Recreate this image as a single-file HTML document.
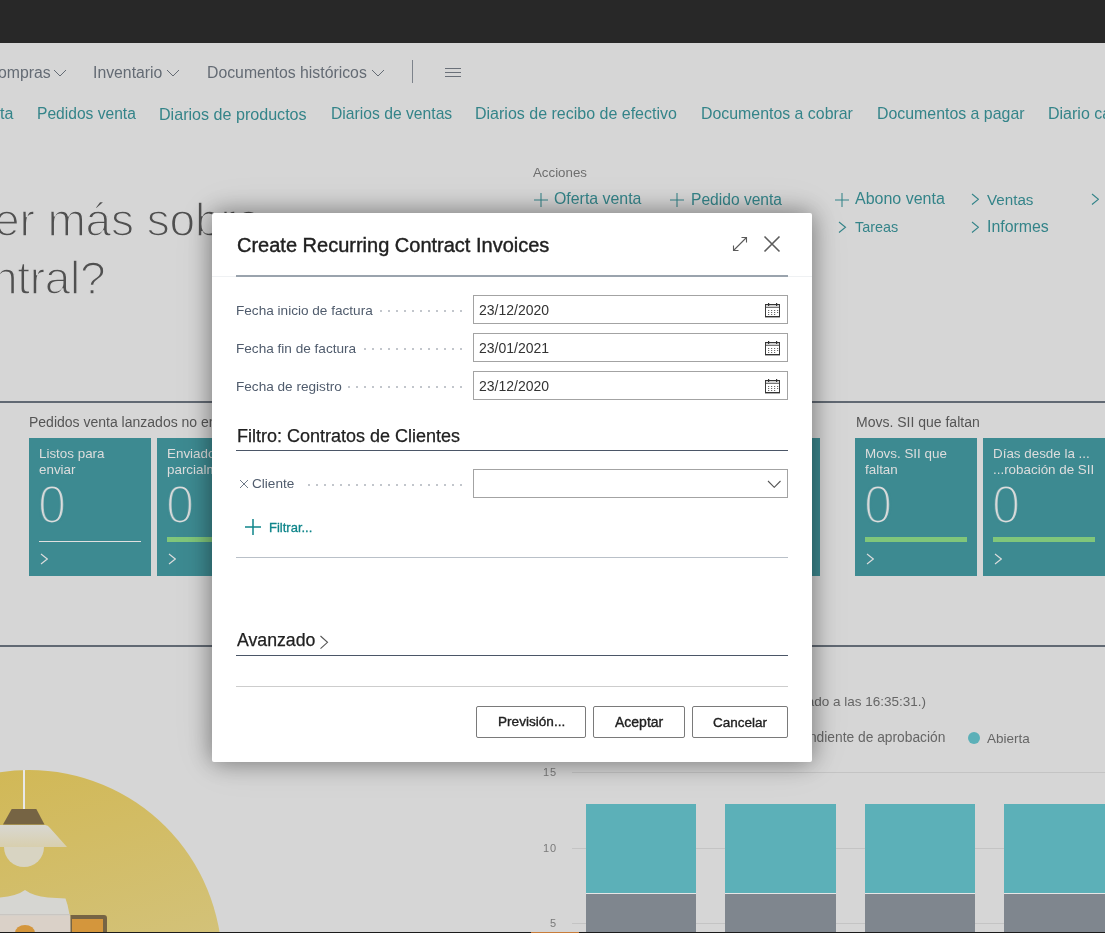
<!DOCTYPE html>
<html><head><meta charset="utf-8"><style>
html,body{margin:0;padding:0;width:1105px;height:933px;overflow:hidden;background:#d6d6d6;}
body>div,body>svg{position:absolute;}
.t{font-family:"Liberation Sans", sans-serif;white-space:nowrap;will-change:transform;}
</style></head><body>
<div style="left:0px;top:0px;width:1105px;height:43px;background:#282828;"></div>
<div class="t" style="right:1054.5px;top:65.33px;font-size:15.8px;line-height:15.8px;color:#646b74;">ompras</div>
<svg style="left:53px;top:68.5px" width="14" height="8"><path d="M1 1 L7.0 7 L13 1" fill="none" stroke="#646b74" stroke-width="1"/></svg>
<div class="t" style="left:93px;top:65.33px;font-size:15.8px;line-height:15.8px;color:#646b74;">Inventario</div>
<svg style="left:166px;top:68.5px" width="14" height="8"><path d="M1 1 L7.0 7 L13 1" fill="none" stroke="#646b74" stroke-width="1"/></svg>
<div class="t" style="left:206.5px;top:65.33px;font-size:15.8px;line-height:15.8px;color:#646b74;">Documentos históricos</div>
<svg style="left:370.5px;top:68.5px" width="14" height="8"><path d="M1 1 L7.0 7 L13 1" fill="none" stroke="#646b74" stroke-width="1"/></svg>
<div style="left:412px;top:60px;width:1px;height:23px;background:#7d838b;"></div>
<div style="left:445px;top:68px;width:16px;height:1px;background:#6a7079;"></div>
<div style="left:445px;top:72px;width:16px;height:1px;background:#6a7079;"></div>
<div style="left:445px;top:76px;width:16px;height:1px;background:#6a7079;"></div>
<div class="t" style="right:1092px;top:106.06px;font-size:16px;line-height:16px;color:#348489;">ta</div>
<div class="t" style="left:36.5px;top:106.40px;font-size:15.6px;line-height:15.6px;color:#348489;">Pedidos venta</div>
<div class="t" style="left:159px;top:105.98px;font-size:16.1px;line-height:16.1px;color:#348489;">Diarios de productos</div>
<div class="t" style="left:330.5px;top:106.32px;font-size:15.7px;line-height:15.7px;color:#348489;">Diarios de ventas</div>
<div class="t" style="left:475px;top:106.06px;font-size:16px;line-height:16px;color:#348489;">Diarios de recibo de efectivo</div>
<div class="t" style="left:701px;top:106.15px;font-size:15.9px;line-height:15.9px;color:#348489;">Documentos a cobrar</div>
<div class="t" style="left:877px;top:106.15px;font-size:15.9px;line-height:15.9px;color:#348489;">Documentos a pagar</div>
<div class="t" style="left:1048px;top:106.06px;font-size:16px;line-height:16px;color:#348489;">Diario caja</div>
<div class="t" style="left:533.2px;top:165.75px;font-size:13.3px;line-height:13.3px;color:#6e6e6e;">Acciones</div>
<svg style="left:534.0px;top:193px" width="14" height="14"><path d="M7.0 0 V14 M0 7.0 H14" fill="none" stroke="#348489" stroke-width="1.05"/></svg>
<div class="t" style="left:554.4px;top:191.35px;font-size:15.9px;line-height:15.9px;color:#348489;">Oferta venta</div>
<svg style="left:670.0px;top:193px" width="14" height="14"><path d="M7.0 0 V14 M0 7.0 H14" fill="none" stroke="#348489" stroke-width="1.05"/></svg>
<div class="t" style="left:690.5px;top:191.60px;font-size:15.6px;line-height:15.6px;color:#348489;">Pedido venta</div>
<svg style="left:834.5px;top:193px" width="14" height="14"><path d="M7.0 0 V14 M0 7.0 H14" fill="none" stroke="#348489" stroke-width="1.05"/></svg>
<div class="t" style="left:855px;top:191.26px;font-size:16px;line-height:16px;color:#348489;">Abono venta</div>
<svg style="left:970.5px;top:193.2px" width="8.5" height="12.5"><path d="M1 1 L7.5 6.25 L1 11.5" fill="none" stroke="#348489" stroke-width="1.1"/></svg>
<div class="t" style="left:987px;top:191.94px;font-size:15.2px;line-height:15.2px;color:#348489;">Ventas</div>
<svg style="left:1090.5px;top:193.2px" width="8.5" height="12.5"><path d="M1 1 L7.5 6.25 L1 11.5" fill="none" stroke="#348489" stroke-width="1.1"/></svg>
<svg style="left:838px;top:220.5px" width="8.5" height="12.5"><path d="M1 1 L7.5 6.25 L1 11.5" fill="none" stroke="#348489" stroke-width="1.1"/></svg>
<div class="t" style="left:855px;top:219.82px;font-size:14.4px;line-height:14.4px;color:#348489;">Tareas</div>
<svg style="left:970.5px;top:220.5px" width="8.5" height="12.5"><path d="M1 1 L7.5 6.25 L1 11.5" fill="none" stroke="#348489" stroke-width="1.1"/></svg>
<div class="t" style="left:987px;top:218.55px;font-size:15.9px;line-height:15.9px;color:#348489;">Informes</div>
<div class="t" style="left:-6.5px;top:196.78px;font-size:46px;line-height:46px;color:#505050;letter-spacing:-0.1px;-webkit-text-stroke:1.5px #d6d6d6">er más sobre</div>
<div class="t" style="left:-8px;top:255.08px;font-size:46px;line-height:46px;color:#505050;letter-spacing:-0.3px;-webkit-text-stroke:1.5px #d6d6d6">ntral?</div>
<div style="left:0px;top:401px;width:1105px;height:2px;background:#616973;"></div>
<div style="left:0px;top:645px;width:1105px;height:2px;background:#616973;"></div>
<div class="t" style="left:29.4px;top:415.16px;font-size:14px;line-height:14px;color:#555555;">Pedidos venta lanzados no enviados</div>
<div class="t" style="left:855.7px;top:415.16px;font-size:14px;line-height:14px;color:#555555;">Movs. SII que faltan</div>
<div style="left:29px;top:438px;width:122px;height:138px;background:#3d8a91;"></div>
<div class="t" style="left:39px;top:446.66px;font-size:13.4px;line-height:13.4px;color:#dddddd;">Listos para</div>
<div class="t" style="left:39px;top:462.66px;font-size:13.4px;line-height:13.4px;color:#dddddd;">enviar</div>
<div class="t" style="left:37.8px;top:478.16px;font-size:53px;line-height:53px;color:#dddddd;-webkit-text-stroke:2.2px #3d8a91;transform:scaleX(0.95);transform-origin:0 0">0</div>
<div style="left:39px;top:541px;width:102px;height:1px;background:#e0e0e0;"></div>
<svg style="left:40px;top:553px" width="8.3" height="12"><path d="M1 1 L7.3 6.0 L1 11" fill="none" stroke="#dddddd" stroke-width="1.1"/></svg>
<div style="left:157px;top:438px;width:122px;height:138px;background:#3d8a91;"></div>
<div class="t" style="left:167px;top:446.66px;font-size:13.4px;line-height:13.4px;color:#dddddd;">Enviados</div>
<div class="t" style="left:167px;top:462.66px;font-size:13.4px;line-height:13.4px;color:#dddddd;">parcialmente</div>
<div class="t" style="left:165.8px;top:478.16px;font-size:53px;line-height:53px;color:#dddddd;-webkit-text-stroke:2.2px #3d8a91;transform:scaleX(0.95);transform-origin:0 0">0</div>
<div style="left:167px;top:537px;width:102px;height:5px;background:#80c67a;"></div>
<svg style="left:168px;top:553px" width="8.3" height="12"><path d="M1 1 L7.3 6.0 L1 11" fill="none" stroke="#dddddd" stroke-width="1.1"/></svg>
<div style="left:698px;top:438px;width:122px;height:138px;background:#3d8a91;"></div>
<div class="t" style="left:708px;top:446.66px;font-size:13.4px;line-height:13.4px;color:#dddddd;">Pedidos</div>
<div class="t" style="left:708px;top:462.66px;font-size:13.4px;line-height:13.4px;color:#dddddd;">abiertos</div>
<div class="t" style="left:706.8px;top:478.16px;font-size:53px;line-height:53px;color:#dddddd;-webkit-text-stroke:2.2px #3d8a91;transform:scaleX(0.95);transform-origin:0 0">0</div>
<div style="left:708px;top:537px;width:102px;height:5px;background:#80c67a;"></div>
<svg style="left:709px;top:553px" width="8.3" height="12"><path d="M1 1 L7.3 6.0 L1 11" fill="none" stroke="#dddddd" stroke-width="1.1"/></svg>
<div style="left:855px;top:438px;width:122px;height:138px;background:#3d8a91;"></div>
<div class="t" style="left:865px;top:446.66px;font-size:13.4px;line-height:13.4px;color:#dddddd;">Movs. SII que</div>
<div class="t" style="left:865px;top:462.66px;font-size:13.4px;line-height:13.4px;color:#dddddd;">faltan</div>
<div class="t" style="left:863.8px;top:478.16px;font-size:53px;line-height:53px;color:#dddddd;-webkit-text-stroke:2.2px #3d8a91;transform:scaleX(0.95);transform-origin:0 0">0</div>
<div style="left:865px;top:537px;width:102px;height:5px;background:#80c67a;"></div>
<svg style="left:866px;top:553px" width="8.3" height="12"><path d="M1 1 L7.3 6.0 L1 11" fill="none" stroke="#dddddd" stroke-width="1.1"/></svg>
<div style="left:983px;top:438px;width:122px;height:138px;background:#3d8a91;"></div>
<div class="t" style="left:993px;top:446.66px;font-size:13.4px;line-height:13.4px;color:#dddddd;">Días desde la ...</div>
<div class="t" style="left:993px;top:462.66px;font-size:13.4px;line-height:13.4px;color:#dddddd;">...robación de SII</div>
<div class="t" style="left:991.8px;top:478.16px;font-size:53px;line-height:53px;color:#dddddd;-webkit-text-stroke:2.2px #3d8a91;transform:scaleX(0.95);transform-origin:0 0">0</div>
<div style="left:993px;top:537px;width:102px;height:5px;background:#80c67a;"></div>
<svg style="left:994px;top:553px" width="8.3" height="12"><path d="M1 1 L7.3 6.0 L1 11" fill="none" stroke="#dddddd" stroke-width="1.1"/></svg>
<div class="t" style="right:178.60000000000002px;top:695.08px;font-size:13.5px;line-height:13.5px;color:#666666;">(Actualizado a las 16:35:31.)</div>
<div class="t" style="right:160px;top:731.33px;font-size:13.8px;line-height:13.8px;color:#666666;">Pendiente de aprobación</div>
<div style="left:967.5px;top:732.3px;width:12px;height:12px;border-radius:50%;background:#5cb0b8"></div>
<div class="t" style="left:987px;top:731.58px;font-size:13.5px;line-height:13.5px;color:#666666;">Abierta</div>
<div style="left:572px;top:772px;width:533px;height:1px;background:#c4c4c4;"></div>
<div class="t" style="right:547.5px;top:767.19px;font-size:11px;line-height:11px;color:#7a7a7a;letter-spacing:1px">15</div>
<div style="left:572px;top:848px;width:533px;height:1px;background:#c4c4c4;"></div>
<div class="t" style="right:547.5px;top:843.19px;font-size:11px;line-height:11px;color:#7a7a7a;letter-spacing:1px">10</div>
<div style="left:572px;top:923px;width:533px;height:1px;background:#c4c4c4;"></div>
<div class="t" style="right:547.5px;top:918.19px;font-size:11px;line-height:11px;color:#7a7a7a;letter-spacing:1px">5</div>
<div style="left:586px;top:804px;width:110px;height:89px;background:#5cb0b8;"></div>
<div style="left:586px;top:893px;width:110px;height:1px;background:#e6e6e6;"></div>
<div style="left:586px;top:894px;width:110px;height:39px;background:#7f868e;"></div>
<div style="left:725px;top:804px;width:111px;height:89px;background:#5cb0b8;"></div>
<div style="left:725px;top:893px;width:111px;height:1px;background:#e6e6e6;"></div>
<div style="left:725px;top:894px;width:111px;height:39px;background:#7f868e;"></div>
<div style="left:865px;top:804px;width:110px;height:89px;background:#5cb0b8;"></div>
<div style="left:865px;top:893px;width:110px;height:1px;background:#e6e6e6;"></div>
<div style="left:865px;top:894px;width:110px;height:39px;background:#7f868e;"></div>
<div style="left:1004px;top:804px;width:101px;height:89px;background:#5cb0b8;"></div>
<div style="left:1004px;top:893px;width:101px;height:1px;background:#e6e6e6;"></div>
<div style="left:1004px;top:894px;width:101px;height:39px;background:#7f868e;"></div>
<svg style="left:0;top:760px" width="240" height="173">
<defs><linearGradient id="cg" x1="0" y1="0" x2="0.3" y2="1"><stop offset="0" stop-color="#d1b64f"/><stop offset="1" stop-color="#d4c88e"/></linearGradient>
<linearGradient id="sg" x1="0" y1="0" x2="0" y2="1"><stop offset="0" stop-color="#d9d8d2"/><stop offset="1" stop-color="#d8cfae"/></linearGradient></defs>
<circle cx="29" cy="203" r="193" fill="url(#cg)"/>
<rect x="23" y="10" width="2" height="39" fill="#e8e8e8"/>
<path d="M11.7 49 H36.3 L44.5 64.5 H3 Z" fill="#766444"/>
<circle cx="24" cy="87" r="20" fill="#d8d4c2"/>
<path d="M0 65 H45 Q48 65 50 68 L67 87 H0 Z" fill="url(#sg)"/>
<path d="M0 137.5 Q17 136 25 130 Q33 136 48 137.5 L65.5 138.5 Q70 150 71.3 173 H0 Z" fill="#d6d6d2"/>
<rect x="0" y="154" width="70" height="1.5" fill="#c9c6c2"/>
<rect x="0" y="155.5" width="70.5" height="17.5" fill="#dad1c8"/>
<path d="M15 173 A10 8 0 0 1 35 173 Z" fill="#d4963c"/>
<path d="M70.5 173 V155 H104 Q107 155 107 158 V173 Z" fill="#766444"/>
<rect x="72" y="159" width="31" height="14" fill="#d4963c"/>
</svg>
<div style="left:0px;top:932px;width:1105px;height:1px;background:#1b1b1b;"></div>
<div style="left:531px;top:932px;width:48px;height:1px;background:#c87c3a;"></div>
<div style="left:212px;top:213px;width:600px;height:549px;background:#fff;border-radius:2px;box-shadow:0 0 24px rgba(0,0,0,0.43),0 0 44px rgba(0,0,0,0.09)"></div>
<div class="t" style="left:236.5px;top:235.48px;font-size:20px;line-height:20px;color:#212121;-webkit-text-stroke:0.4px #212121">Create Recurring Contract Invoices</div>
<svg style="left:731px;top:235px" width="18" height="18"><path d="M2.5 15.5 L15.5 2.5 M10.5 2.5 H15.5 V7.5 M2.5 10.5 V15.5 H7.5" fill="none" stroke="#5a5a5a" stroke-width="1.1"/></svg>
<svg style="left:763px;top:235px" width="18" height="18"><path d="M1.5 1.5 L16.5 16.5 M16.5 1.5 L1.5 16.5" fill="none" stroke="#5c5c5c" stroke-width="1.6"/></svg>
<div style="left:212px;top:276px;width:600px;height:1px;background:#eff1f3;"></div>
<div style="left:236px;top:275px;width:552px;height:2px;background:#9aa3ad;"></div>
<div class="t" style="left:236.3px;top:304.19px;font-size:13.6px;line-height:13.6px;color:#505c6d;">Fecha inicio de factura</div>
<div style="left:460.0px;top:310px;width:1.5px;height:1.5px;background:#c2c6cc"></div><div style="left:452.0px;top:310px;width:1.5px;height:1.5px;background:#c2c6cc"></div><div style="left:444.0px;top:310px;width:1.5px;height:1.5px;background:#c2c6cc"></div><div style="left:436.0px;top:310px;width:1.5px;height:1.5px;background:#c2c6cc"></div><div style="left:428.0px;top:310px;width:1.5px;height:1.5px;background:#c2c6cc"></div><div style="left:420.0px;top:310px;width:1.5px;height:1.5px;background:#c2c6cc"></div><div style="left:412.0px;top:310px;width:1.5px;height:1.5px;background:#c2c6cc"></div><div style="left:404.0px;top:310px;width:1.5px;height:1.5px;background:#c2c6cc"></div><div style="left:396.0px;top:310px;width:1.5px;height:1.5px;background:#c2c6cc"></div><div style="left:388.0px;top:310px;width:1.5px;height:1.5px;background:#c2c6cc"></div><div style="left:380.0px;top:310px;width:1.5px;height:1.5px;background:#c2c6cc"></div>
<div style="left:473px;top:295px;width:313px;height:27px;border:1px solid #a3a3a3"></div>
<div class="t" style="left:478.6px;top:302.86px;font-size:14px;line-height:14px;color:#333333;">23/12/2020</div>
<svg style="left:765px;top:303px" width="16" height="15">
<rect x="0.5" y="1.5" width="14" height="12" fill="none" stroke="#3a3a3a" stroke-width="1"/>
<rect x="0" y="13" width="15" height="1.4" fill="#333"/>
<rect x="0" y="1" width="15" height="1.2" fill="#333"/>
<rect x="1" y="2.2" width="13" height="1.8" fill="#cfcfcf"/>
<rect x="1" y="4" width="13" height="1" fill="#777"/>
<rect x="3" y="0" width="1.2" height="3" fill="#333"/><rect x="11" y="0" width="1.2" height="3" fill="#333"/>
<rect x="3" y="7" width="1.2" height="1" fill="#6a6a6a"/><rect x="6" y="7" width="1.2" height="1" fill="#6a6a6a"/><rect x="9" y="7" width="1.2" height="1" fill="#6a6a6a"/><rect x="12" y="7" width="1.2" height="1" fill="#6a6a6a"/><rect x="3" y="9" width="1.2" height="1" fill="#6a6a6a"/><rect x="6" y="9" width="1.2" height="1" fill="#6a6a6a"/><rect x="9" y="9" width="1.2" height="1" fill="#6a6a6a"/><rect x="12" y="9" width="1.2" height="1" fill="#6a6a6a"/><rect x="3" y="11" width="1.2" height="1" fill="#6a6a6a"/><rect x="6" y="11" width="1.2" height="1" fill="#6a6a6a"/><rect x="9" y="11" width="1.2" height="1" fill="#6a6a6a"/>
</svg>
<div class="t" style="left:236.3px;top:342.19px;font-size:13.6px;line-height:13.6px;color:#505c6d;">Fecha fin de factura</div>
<div style="left:460.0px;top:348px;width:1.5px;height:1.5px;background:#c2c6cc"></div><div style="left:452.0px;top:348px;width:1.5px;height:1.5px;background:#c2c6cc"></div><div style="left:444.0px;top:348px;width:1.5px;height:1.5px;background:#c2c6cc"></div><div style="left:436.0px;top:348px;width:1.5px;height:1.5px;background:#c2c6cc"></div><div style="left:428.0px;top:348px;width:1.5px;height:1.5px;background:#c2c6cc"></div><div style="left:420.0px;top:348px;width:1.5px;height:1.5px;background:#c2c6cc"></div><div style="left:412.0px;top:348px;width:1.5px;height:1.5px;background:#c2c6cc"></div><div style="left:404.0px;top:348px;width:1.5px;height:1.5px;background:#c2c6cc"></div><div style="left:396.0px;top:348px;width:1.5px;height:1.5px;background:#c2c6cc"></div><div style="left:388.0px;top:348px;width:1.5px;height:1.5px;background:#c2c6cc"></div><div style="left:380.0px;top:348px;width:1.5px;height:1.5px;background:#c2c6cc"></div><div style="left:372.0px;top:348px;width:1.5px;height:1.5px;background:#c2c6cc"></div><div style="left:364.0px;top:348px;width:1.5px;height:1.5px;background:#c2c6cc"></div>
<div style="left:473px;top:333px;width:313px;height:27px;border:1px solid #a3a3a3"></div>
<div class="t" style="left:478.6px;top:340.86px;font-size:14px;line-height:14px;color:#333333;">23/01/2021</div>
<svg style="left:765px;top:341px" width="16" height="15">
<rect x="0.5" y="1.5" width="14" height="12" fill="none" stroke="#3a3a3a" stroke-width="1"/>
<rect x="0" y="13" width="15" height="1.4" fill="#333"/>
<rect x="0" y="1" width="15" height="1.2" fill="#333"/>
<rect x="1" y="2.2" width="13" height="1.8" fill="#cfcfcf"/>
<rect x="1" y="4" width="13" height="1" fill="#777"/>
<rect x="3" y="0" width="1.2" height="3" fill="#333"/><rect x="11" y="0" width="1.2" height="3" fill="#333"/>
<rect x="3" y="7" width="1.2" height="1" fill="#6a6a6a"/><rect x="6" y="7" width="1.2" height="1" fill="#6a6a6a"/><rect x="9" y="7" width="1.2" height="1" fill="#6a6a6a"/><rect x="12" y="7" width="1.2" height="1" fill="#6a6a6a"/><rect x="3" y="9" width="1.2" height="1" fill="#6a6a6a"/><rect x="6" y="9" width="1.2" height="1" fill="#6a6a6a"/><rect x="9" y="9" width="1.2" height="1" fill="#6a6a6a"/><rect x="12" y="9" width="1.2" height="1" fill="#6a6a6a"/><rect x="3" y="11" width="1.2" height="1" fill="#6a6a6a"/><rect x="6" y="11" width="1.2" height="1" fill="#6a6a6a"/><rect x="9" y="11" width="1.2" height="1" fill="#6a6a6a"/>
</svg>
<div class="t" style="left:236.3px;top:380.19px;font-size:13.6px;line-height:13.6px;color:#505c6d;">Fecha de registro</div>
<div style="left:460.0px;top:386px;width:1.5px;height:1.5px;background:#c2c6cc"></div><div style="left:452.0px;top:386px;width:1.5px;height:1.5px;background:#c2c6cc"></div><div style="left:444.0px;top:386px;width:1.5px;height:1.5px;background:#c2c6cc"></div><div style="left:436.0px;top:386px;width:1.5px;height:1.5px;background:#c2c6cc"></div><div style="left:428.0px;top:386px;width:1.5px;height:1.5px;background:#c2c6cc"></div><div style="left:420.0px;top:386px;width:1.5px;height:1.5px;background:#c2c6cc"></div><div style="left:412.0px;top:386px;width:1.5px;height:1.5px;background:#c2c6cc"></div><div style="left:404.0px;top:386px;width:1.5px;height:1.5px;background:#c2c6cc"></div><div style="left:396.0px;top:386px;width:1.5px;height:1.5px;background:#c2c6cc"></div><div style="left:388.0px;top:386px;width:1.5px;height:1.5px;background:#c2c6cc"></div><div style="left:380.0px;top:386px;width:1.5px;height:1.5px;background:#c2c6cc"></div><div style="left:372.0px;top:386px;width:1.5px;height:1.5px;background:#c2c6cc"></div><div style="left:364.0px;top:386px;width:1.5px;height:1.5px;background:#c2c6cc"></div><div style="left:356.0px;top:386px;width:1.5px;height:1.5px;background:#c2c6cc"></div><div style="left:348.0px;top:386px;width:1.5px;height:1.5px;background:#c2c6cc"></div>
<div style="left:473px;top:371px;width:313px;height:27px;border:1px solid #a3a3a3"></div>
<div class="t" style="left:478.6px;top:378.86px;font-size:14px;line-height:14px;color:#333333;">23/12/2020</div>
<svg style="left:765px;top:379px" width="16" height="15">
<rect x="0.5" y="1.5" width="14" height="12" fill="none" stroke="#3a3a3a" stroke-width="1"/>
<rect x="0" y="13" width="15" height="1.4" fill="#333"/>
<rect x="0" y="1" width="15" height="1.2" fill="#333"/>
<rect x="1" y="2.2" width="13" height="1.8" fill="#cfcfcf"/>
<rect x="1" y="4" width="13" height="1" fill="#777"/>
<rect x="3" y="0" width="1.2" height="3" fill="#333"/><rect x="11" y="0" width="1.2" height="3" fill="#333"/>
<rect x="3" y="7" width="1.2" height="1" fill="#6a6a6a"/><rect x="6" y="7" width="1.2" height="1" fill="#6a6a6a"/><rect x="9" y="7" width="1.2" height="1" fill="#6a6a6a"/><rect x="12" y="7" width="1.2" height="1" fill="#6a6a6a"/><rect x="3" y="9" width="1.2" height="1" fill="#6a6a6a"/><rect x="6" y="9" width="1.2" height="1" fill="#6a6a6a"/><rect x="9" y="9" width="1.2" height="1" fill="#6a6a6a"/><rect x="12" y="9" width="1.2" height="1" fill="#6a6a6a"/><rect x="3" y="11" width="1.2" height="1" fill="#6a6a6a"/><rect x="6" y="11" width="1.2" height="1" fill="#6a6a6a"/><rect x="9" y="11" width="1.2" height="1" fill="#6a6a6a"/>
</svg>
<div class="t" style="left:236.8px;top:426.77px;font-size:18px;line-height:18px;color:#212121;-webkit-text-stroke:0.25px #212121">Filtro: Contratos de Clientes</div>
<div style="left:236px;top:450px;width:552px;height:1px;background:#4b5667;"></div>
<svg style="left:239px;top:478.5px" width="10" height="10"><path d="M1 1 L9 9 M9 1 L1 9" fill="none" stroke="#6f7a88" stroke-width="1"/></svg>
<div class="t" style="left:252.2px;top:477.49px;font-size:13.6px;line-height:13.6px;color:#505c6d;">Cliente</div>
<div style="left:460.0px;top:484px;width:1.5px;height:1.5px;background:#c2c6cc"></div><div style="left:452.0px;top:484px;width:1.5px;height:1.5px;background:#c2c6cc"></div><div style="left:444.0px;top:484px;width:1.5px;height:1.5px;background:#c2c6cc"></div><div style="left:436.0px;top:484px;width:1.5px;height:1.5px;background:#c2c6cc"></div><div style="left:428.0px;top:484px;width:1.5px;height:1.5px;background:#c2c6cc"></div><div style="left:420.0px;top:484px;width:1.5px;height:1.5px;background:#c2c6cc"></div><div style="left:412.0px;top:484px;width:1.5px;height:1.5px;background:#c2c6cc"></div><div style="left:404.0px;top:484px;width:1.5px;height:1.5px;background:#c2c6cc"></div><div style="left:396.0px;top:484px;width:1.5px;height:1.5px;background:#c2c6cc"></div><div style="left:388.0px;top:484px;width:1.5px;height:1.5px;background:#c2c6cc"></div><div style="left:380.0px;top:484px;width:1.5px;height:1.5px;background:#c2c6cc"></div><div style="left:372.0px;top:484px;width:1.5px;height:1.5px;background:#c2c6cc"></div><div style="left:364.0px;top:484px;width:1.5px;height:1.5px;background:#c2c6cc"></div><div style="left:356.0px;top:484px;width:1.5px;height:1.5px;background:#c2c6cc"></div><div style="left:348.0px;top:484px;width:1.5px;height:1.5px;background:#c2c6cc"></div><div style="left:340.0px;top:484px;width:1.5px;height:1.5px;background:#c2c6cc"></div><div style="left:332.0px;top:484px;width:1.5px;height:1.5px;background:#c2c6cc"></div><div style="left:324.0px;top:484px;width:1.5px;height:1.5px;background:#c2c6cc"></div><div style="left:316.0px;top:484px;width:1.5px;height:1.5px;background:#c2c6cc"></div><div style="left:308.0px;top:484px;width:1.5px;height:1.5px;background:#c2c6cc"></div>
<div style="left:473px;top:469px;width:313px;height:27px;border:1px solid #a3a3a3"></div>
<svg style="left:767px;top:480px" width="14.5" height="8.3"><path d="M1 1 L7.25 7.3 L13.5 1" fill="none" stroke="#555" stroke-width="1.1"/></svg>
<svg style="left:244.5px;top:519px" width="16" height="16"><path d="M8.0 0 V16 M0 8.0 H16" fill="none" stroke="#0f858a" stroke-width="1.5"/></svg>
<div class="t" style="left:269.3px;top:521.00px;font-size:13px;line-height:13px;color:#0f858a;-webkit-text-stroke:0.3px #0f858a">Filtrar...</div>
<div style="left:236px;top:557px;width:552px;height:1px;background:#b9c0c8;"></div>
<div class="t" style="left:236.5px;top:631.63px;font-size:17.7px;line-height:17.7px;color:#212121;-webkit-text-stroke:0.25px #212121">Avanzado</div>
<svg style="left:318.5px;top:635px" width="10" height="15"><path d="M1.5 1 L8.5 7.3 L1.5 13.6" fill="none" stroke="#555" stroke-width="1.1"/></svg>
<div style="left:236px;top:655px;width:552px;height:1px;background:#4b5667;"></div>
<div style="left:236px;top:686px;width:552px;height:1px;background:#cdcdcd;"></div>
<div style="left:476px;top:706px;width:108px;height:30px;border:1px solid #7a7a7a;border-radius:2px;background:#fff"></div>
<div class="t" style="left:498.2px;top:715.49px;font-size:13.6px;line-height:13.6px;color:#212121;-webkit-text-stroke:0.35px #212121">Previsión...</div>
<div style="left:593px;top:706px;width:90px;height:30px;border:1px solid #7a7a7a;border-radius:2px;background:#fff"></div>
<div class="t" style="left:614.5px;top:715.16px;font-size:14px;line-height:14px;color:#212121;-webkit-text-stroke:0.35px #212121">Aceptar</div>
<div style="left:692px;top:706px;width:94px;height:30px;border:1px solid #7a7a7a;border-radius:2px;background:#fff"></div>
<div class="t" style="left:713.3px;top:715.58px;font-size:13.5px;line-height:13.5px;color:#212121;-webkit-text-stroke:0.35px #212121">Cancelar</div>
</body></html>
